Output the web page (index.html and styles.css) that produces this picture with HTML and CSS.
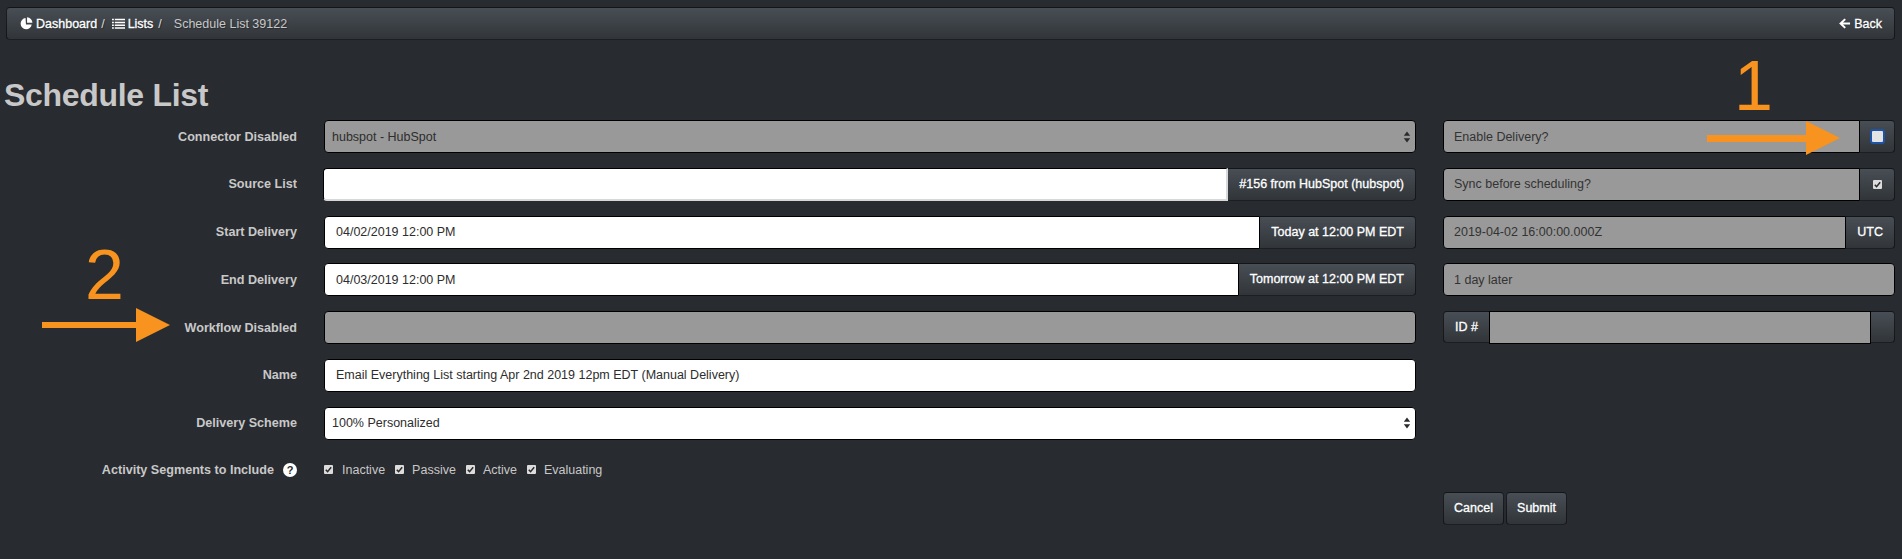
FILE: index.html
```html
<!DOCTYPE html>
<html lang="en">
<head>
<meta charset="utf-8">
<title>Schedule List</title>
<link rel="stylesheet" href="styles.css">
</head>
<body>
<nav class="crumbs">
  <div class="crumb-list">
    <svg class="ico" viewBox="0 0 14 14"><path d="M6 1.2A6 6 0 1 0 12.6 8H6.4z" fill="#fff"/><path d="M7.6 0.4V6.2H13.4A5.9 5.9 0 0 0 7.6 .4z" fill="#fff"/></svg>
    <a>Dashboard</a><span class="sep">/</span>
    <svg class="ico" viewBox="0 0 14 14"><path d="M0 2h2v1.6H0zM3 2h11v1.6H3zM0 5h2v1.6H0zM3 5h11v1.6H3zM0 8h2v1.6H0zM3 8h11v1.6H3zM0 11h2v1.6H0zM3 11h11v1.6H3z" fill="#fff"/></svg>
    <a>Lists</a><span class="sep">/</span>
    <span class="current">Schedule List 39122</span>
  </div>
  <a class="back"><svg class="ico" viewBox="0 0 14 14"><path d="M7 1.5L1.2 7 7 12.5l1.5-1.5L5.4 8.2H13V5.8H5.4L8.500 3z" fill="#fff"/></svg>Back</a>
</nav>

<h1 class="title">Schedule List</h1>

<main class="layout">
  <section class="left">
    <div class="row"><div class="lbl">Connector Disabled</div>
      <div class="field select disabled"><span>hubspot - HubSpot</span>
        <svg class="updown" viewBox="0 0 8 12"><path d="M4 0.500L7.200 4.800H0.800zM4 11.500L0.800 7.200H7.200z" fill="#2b2b2b"/></svg></div></div>
    <div class="row"><div class="lbl">Source List</div>
      <div class="group"><div class="field pad white source grow"></div><div class="addon">#156 from HubSpot (hubspot)</div></div></div>
    <div class="row"><div class="lbl">Start Delivery</div>
      <div class="group"><div class="field pad white grow">04/02/2019 12:00 PM</div><div class="addon">Today at 12:00 PM EDT</div></div></div>
    <div class="row"><div class="lbl">End Delivery</div>
      <div class="group"><div class="field pad white grow">04/03/2019 12:00 PM</div><div class="addon">Tomorrow at 12:00 PM EDT</div></div></div>
    <div class="row"><div class="lbl">Workflow Disabled</div>
      <div class="field disabled"></div></div>
    <div class="row"><div class="lbl">Name</div>
      <div class="field pad white">Email Everything List starting Apr 2nd 2019 12pm EDT (Manual Delivery)</div></div>
    <div class="row"><div class="lbl">Delivery Scheme</div>
      <div class="field select white"><span>100% Personalized</span>
        <svg class="updown" viewBox="0 0 8 12"><path d="M4 0.500L7.200 4.800H0.800zM4 11.500L0.800 7.200H7.200z" fill="#2b2b2b"/></svg></div></div>
    <div class="row short"><div class="lbl">Activity Segments to Include<span class="help">?</span></div>
      <div class="checks">
        <label class="chk"><span class="box"><svg viewBox="0 0 10 10"><path d="M2 5.200l2 2.200L8 2.600" fill="none" stroke="#2a2a2a" stroke-width="1.700"/></svg></span>Inactive</label>
        <label class="chk"><span class="box"><svg viewBox="0 0 10 10"><path d="M2 5.200l2 2.200L8 2.600" fill="none" stroke="#2a2a2a" stroke-width="1.700"/></svg></span>Passive</label>
        <label class="chk"><span class="box"><svg viewBox="0 0 10 10"><path d="M2 5.200l2 2.200L8 2.600" fill="none" stroke="#2a2a2a" stroke-width="1.700"/></svg></span>Active</label>
        <label class="chk"><span class="box"><svg viewBox="0 0 10 10"><path d="M2 5.200l2 2.200L8 2.600" fill="none" stroke="#2a2a2a" stroke-width="1.700"/></svg></span>Evaluating</label>
      </div></div>
  </section>

  <section class="right">
    <div class="group"><div class="field pad-r disabled grow">Enable Delivery?</div><div class="addon tick"><span class="box focus"></span></div></div>
    <div class="group"><div class="field pad-r disabled grow">Sync before scheduling?</div><div class="addon tick"><span class="box"><svg viewBox="0 0 10 10"><path d="M2 5.200l2 2.200L8 2.600" fill="none" stroke="#2a2a2a" stroke-width="1.700"/></svg></span></div></div>
    <div class="group"><div class="field pad-r disabled grow">2019-04-02 16:00:00.000Z</div><div class="addon">UTC</div></div>
    <div class="group"><div class="field pad-r disabled grow">1 day later</div></div>
    <div class="group"><div class="addon first">ID #</div><div class="field disabled mid grow"></div><div class="addon blank"></div></div>
    <div class="actions"><button class="btn">Cancel</button><button class="btn">Submit</button></div>
  </section>
</main>

<div class="note n1">1</div>
<div class="arrow a1"><span class="shaft"></span><span class="head"></span></div>
<div class="note n2">2</div>
<div class="arrow a2"><span class="shaft"></span><span class="head"></span></div>
</body>
</html>
```

FILE: styles.css
```css
* { box-sizing: border-box; }
html, body { margin: 0; height: 559px; overflow: hidden; }
body {
  background: #282b30;
  font-family: "Liberation Sans", Arial, sans-serif;
  font-size: 12.5px;
  color: #c8c8c8;
  position: relative;
}
.crumbs {
  display: flex;
  align-items: center;
  justify-content: space-between;
  height: 33px;
  margin: 7px 7px 0 6px;
  padding: 0 12px 0 13px;
  border: 1px solid rgba(0,0,0,.6);
  border-radius: 4px;
  background: linear-gradient(#484e55, #3a3f44 60%, #313539);
  color: #fff;
  text-shadow: 1px 1px 1px rgba(0,0,0,.3);
}
.crumbs a { -webkit-text-stroke: .3px #fff; }
.crumb-list { display: flex; align-items: center; }
.ico { width: 13px; height: 13px; margin-right: 3px; }
.crumb-list a:first-of-type { margin-right: -1px; }
.sep { margin: 0 7px 0 5px; color: #ddd; }
.sep + .ico { margin-right: 3px; }
.current { color: #c8c8c8; margin-left: 5px; }
.back { display: flex; align-items: center; }
.title {
  margin: 36px 0 0 4px;
  font-size: 32px;
  line-height: 38px;
  font-weight: bold;
  letter-spacing: -.3px;
  color: #c8c8c8;
}
.layout {
  display: flex;
  margin-top: 6px;
  padding-right: 7px;
}
.left {
  width: 1416px;
  display: flex;
  flex-direction: column;
  gap: 14.8px;
}
.right {
  width: 452px;
  margin-left: 27px;
  display: flex;
  flex-direction: column;
  gap: 14.8px;
}
.row {
  display: grid;
  grid-template-columns: 297px 1fr;
  column-gap: 27px;
  align-items: center;
  height: 33px;
}
.row.short { height: 30px; }
.lbl {
  display: flex;
  justify-content: flex-end;
  align-items: center;
  font-size: 12.6px;
  font-weight: bold;
  color: #c8c8c8;
}
.help {
  display: inline-flex;
  align-items: center;
  justify-content: center;
  width: 14px;
  height: 14px;
  margin-left: 9px;
  border-radius: 50%;
  background: #fff;
  color: #282b30;
  font-size: 11px;
  font-weight: bold;
}
.group { display: flex; height: 33px; }
.grow { flex: 1 1 0; min-width: 0; }
.field {
  display: flex;
  align-items: center;
  height: 33px;
  border: 1px solid #000;
  border-radius: 4px;
  color: #2d2d2d;
  white-space: nowrap;
}
.white { background: #fff; }
.disabled { background: #999; }
.pad { padding-left: 11px; }
.pad-r { padding-left: 10px; color: #333; }
.select { padding: 0 4px 0 7px; justify-content: space-between; }
.updown { width: 8px; height: 12px; }
.group .field:not(:last-child) { border-radius: 4px 0 0 4px; }
.group .field.mid { border-radius: 0; }
.source { border-right: 2px solid #d8d8d8; border-bottom: 2px solid #d8d8d8; margin-left: -1px; }
.addon {
  display: flex;
  align-items: center;
  padding: 0 11px 1px;
  height: 33px;
  border: 1px solid rgba(0,0,0,.6);
  border-left: 0;
  border-radius: 0 4px 4px 0;
  background: linear-gradient(#484e55, #3a3f44 60%, #313539);
  color: #fff;
  -webkit-text-stroke: .3px #fff;
  white-space: nowrap;
}
.addon.first { border-left: 1px solid rgba(0,0,0,.6); border-right: 0; border-radius: 4px 0 0 4px; width: 46px; height: 32px; }
.addon.blank { width: 24px; padding: 0; height: 32px; }
.addon.tick { width: 35px; padding: 0; justify-content: center; }
.box {
  display: inline-block;
  width: 9px;
  height: 9px;
  border-radius: 1px;
  background: #dcdcdc;
  line-height: 0;
}
.box svg { width: 100%; height: 100%; }
.box.focus { width: 15px; height: 15px; border: 2px solid #1e54a8; border-radius: 3px; background: #e4e4e4; }
.checks { display: flex; align-items: center; color: #c8c8c8; }
.chk { display: flex; align-items: center; margin-right: 10px; }
.chk .box { margin-right: 9px; margin-left: 0; }
.chk + .chk .box { margin-right: 8px; }
.actions { display: flex; gap: 2px; margin-top: 133px; }
.btn {
  width: 61px;
  height: 33px;
  padding: 0;
  border: 1px solid rgba(0,0,0,.6);
  border-radius: 4px;
  background: linear-gradient(#484e55, #3a3f44 60%, #313539);
  color: #fff;
  -webkit-text-stroke: .3px #fff;
  font: 12.5px "Liberation Sans", Arial, sans-serif;
}
.note {
  position: absolute;
  color: #f7931e;
  font-family: "Liberation Sans", Arial, sans-serif;
  font-size: 70px;
  line-height: 70px;
}
.n1 { left: 1734px; top: 51px; }
.n2 { left: 85px; top: 240px; }
.arrow { position: absolute; display: flex; align-items: center; }
.shaft { display: block; background: #f7931e; height: 7px; }
.head {
  display: block;
  width: 0;
  height: 0;
  border-left: 34px solid #f7931e;
  border-top: 17px solid transparent;
  border-bottom: 17px solid transparent;
}
.a1 { left: 1707px; top: 121px; }
.a1 .shaft { width: 99px; }
.a2 { left: 42px; top: 308px; }
.a2 .shaft { width: 94px; height: 6px; }
```
